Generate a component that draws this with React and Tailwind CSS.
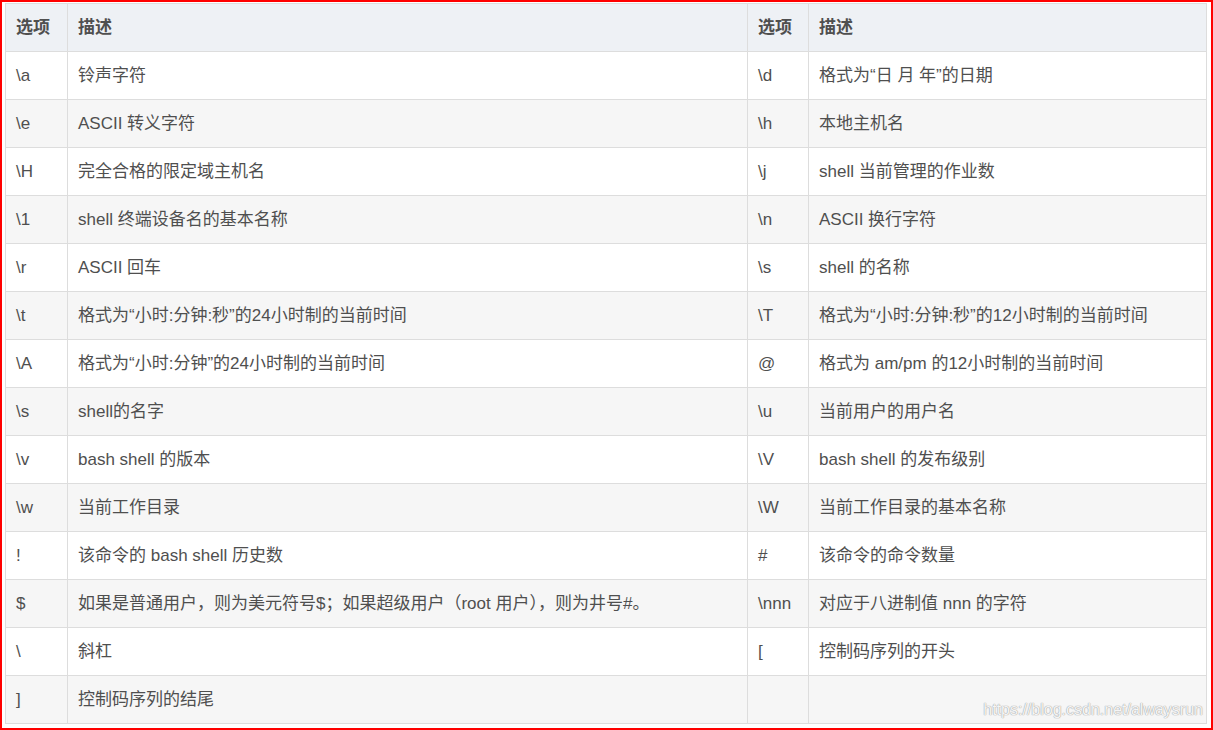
import React from 'react';

const rows = [
  ['\\a', '铃声字符', '\\d', '格式为“日 月 年”的日期'],
  ['\\e', 'ASCII 转义字符', '\\h', '本地主机名'],
  ['\\H', '完全合格的限定域主机名', '\\j', 'shell 当前管理的作业数'],
  ['\\1', 'shell 终端设备名的基本名称', '\\n', 'ASCII 换行字符'],
  ['\\r', 'ASCII 回车', '\\s', 'shell 的名称'],
  ['\\t', '格式为“小时:分钟:秒”的24小时制的当前时间', '\\T', '格式为“小时:分钟:秒”的12小时制的当前时间'],
  ['\\A', '格式为“小时:分钟”的24小时制的当前时间', '@', '格式为 am/pm 的12小时制的当前时间'],
  ['\\s', 'shell的名字', '\\u', '当前用户的用户名'],
  ['\\v', 'bash shell 的版本', '\\V', 'bash shell 的发布级别'],
  ['\\w', '当前工作目录', '\\W', '当前工作目录的基本名称'],
  ['!', '该命令的 bash shell 历史数', '#', '该命令的命令数量'],
  ['$', '如果是普通用户，则为美元符号$；如果超级用户（root 用户），则为井号#。', '\\nnn', '对应于八进制值 nnn 的字符'],
  ['\\', '斜杠', '[', '控制码序列的开头'],
  [']', '控制码序列的结尾', '', ''],
];

export default function App() {
  return (
    <div
      className="relative w-[1213px] h-[730px] border-2 border-[#ff0000] bg-white pl-[3px] pt-[1px] overflow-hidden text-[#4f4f4f]"
      style={{ fontFamily: '"Liberation Sans", "Noto Sans CJK SC", sans-serif' }}
    >
      <table className="w-[1201px] table-fixed border-collapse text-[17px]">
        <colgroup>
          <col className="w-[62px]" />
          <col className="w-[680px]" />
          <col className="w-[61px]" />
          <col className="w-[398px]" />
        </colgroup>
        <thead>
          <tr className="h-[48px] bg-[#eef1f5] font-bold">
            <th className="border border-[#dddddd] px-[10px] text-left">选项</th>
            <th className="border border-[#dddddd] px-[10px] text-left">描述</th>
            <th className="border border-[#dddddd] px-[10px] text-left">选项</th>
            <th className="border border-[#dddddd] px-[10px] text-left">描述</th>
          </tr>
        </thead>
        <tbody>
          {rows.map((r, i) => (
            <tr key={i} className={`h-[48px] ${i % 2 === 1 ? 'bg-[#f6f6f6]' : 'bg-white'}`}>
              {r.map((c, j) => (
                <td key={j} className="border border-[#dddddd] px-[10px] whitespace-nowrap">
                  {c}
                </td>
              ))}
            </tr>
          ))}
        </tbody>
      </table>
      {/* watermark */}
      <div
        className="absolute right-[8px] bottom-[6px] text-[16px] text-white/90"
        style={{ textShadow: '0 0 1px #9a9a9a, 0 0 1px #9a9a9a' }}
      >
        https://blog.csdn.net/alwaysrun
      </div>
    </div>
  );
}
